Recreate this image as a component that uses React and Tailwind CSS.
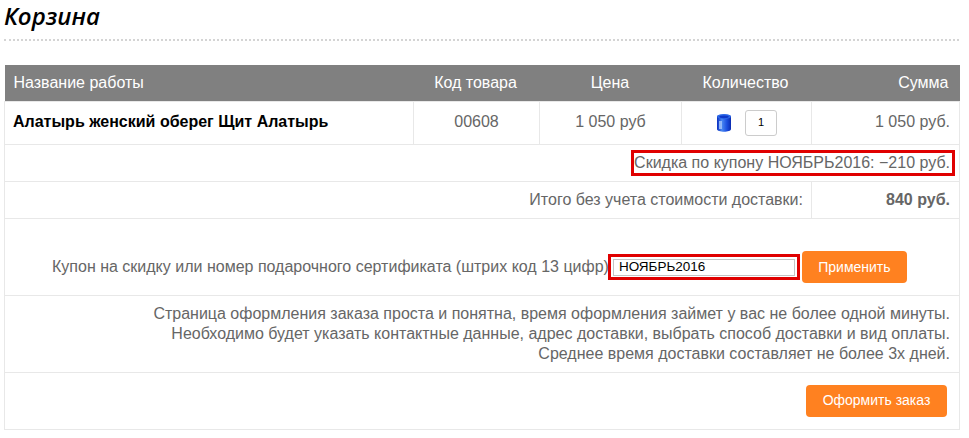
const cell = "border border-[#e8e8e8]";

const BarrelIcon = () => (
  <svg width="16" height="20" viewBox="0 0 16 20">
    <defs>
      <linearGradient id="barrel" x1="0" x2="1" y1="0" y2="0">
        <stop offset="0" stopColor="#0a2fc0" />
        <stop offset="0.35" stopColor="#4a88f2" />
        <stop offset="0.7" stopColor="#1c4fe0" />
        <stop offset="1" stopColor="#0a2bb0" />
      </linearGradient>
    </defs>
    <path d="M1 3.5C1 0.8 15 0.8 15 3.5V16C15 19.6 1 19.6 1 16Z" fill="url(#barrel)" />
    <ellipse cx="8" cy="3.5" rx="7" ry="2.6" fill="#2f6be8" />
    <ellipse cx="8" cy="3.8" rx="4.8" ry="1.4" fill="#0f38c8" />
    <rect x="3" y="8" width="3" height="8" fill="#a9c8fa" opacity="0.8" />
  </svg>
);

export default function App() {
  return (
    <div className="w-[969px] h-[438px] overflow-hidden bg-white font-['Liberation_Sans',Arial,sans-serif] text-[16px] text-[#666666]">
      <div className="pl-[4px] pr-[10px]">
        <h1 className="h-[41px] border-b-2 border-dotted border-[#d4d4d4] font-['Open_Sans',sans-serif] text-[24px] leading-[32px] italic font-semibold text-black">
          Корзина
        </h1>
        <table className="mt-[24px] w-[955px] table-fixed border-collapse">
          <colgroup>
            <col className="w-[409px]" />
            <col className="w-[126px]" />
            <col className="w-[142px]" />
            <col className="w-[130px]" />
            <col className="w-[148px]" />
          </colgroup>
          <thead>
            <tr className="h-[36px] bg-[#808080] font-normal text-white">
              <th className="pl-[9px] text-left font-normal">Название работы</th>
              <th className="pr-[2px] font-normal">Код товара</th>
              <th className="pr-[1px] font-normal">Цена</th>
              <th className="pr-[2px] font-normal">Количество</th>
              <th className="pr-[11px] text-right font-normal">Сумма</th>
            </tr>
          </thead>
          <tbody>
            <tr className="h-[43px]">
              <td className={`${cell} pl-[8px] pb-[2px] font-bold text-black`}>Алатырь женский оберег Щит Алатырь</td>
              <td className={`${cell} pb-[2px] text-center`}>00608</td>
              <td className={`${cell} pb-[2px] text-center`}>1 050 руб</td>
              <td className={cell}>
                <div className="flex items-center justify-center gap-[13px]">
                  <BarrelIcon />
                  <div className="flex h-[26px] w-[32px] items-center justify-center rounded-[3px] border border-[#cccccc] text-[11px] text-black">
                    1
                  </div>
                </div>
              </td>
              <td className={`${cell} pr-[9px] pb-[2px] text-right`}>1 050 руб.</td>
            </tr>
            <tr className="h-[37px]">
              <td colSpan={5} className={`${cell} pr-[4px]`}>
                <div className="flex justify-end">
                  <span className="h-[26px] border-[3px] border-[#e00000] pr-[2px] leading-[20px]">
                    Скидка по купону НОЯБРЬ2016: −210 руб.
                  </span>
                </div>
              </td>
            </tr>
            <tr className="h-[37px]">
              <td colSpan={4} className={`${cell} pr-[8px] text-right`}>Итого без учета стоимости доставки:</td>
              <td className={`${cell} pr-[9px] text-right font-bold`}>840 руб.</td>
            </tr>
            <tr className="h-[77px]">
              <td colSpan={5} className={cell}>
                <div className="flex items-center pl-[47px] pt-[21px]">
                  <span className="whitespace-nowrap">Купон на скидку или номер подарочного сертификата (штрих код 13 цифр)</span>
                  <span className="ml-[-1px] flex h-[26px] w-[192px] shrink-0 items-center justify-center border-[3px] border-[#e00000]">
                    <input
                      readOnly
                      value="НОЯБРЬ2016"
                      className="h-[17px] w-[182px] border border-[#c4c4c4] pl-[5px] font-['Liberation_Sans',sans-serif] text-[13.5px] text-black outline-none"
                    />
                  </span>
                  <button className="ml-[2px] h-[32px] w-[105px] rounded-[4px] bg-[#ff8120] text-[14px] text-white">Применить</button>
                </div>
              </td>
            </tr>
            <tr className="h-[77px]">
              <td colSpan={5} className={`${cell} pr-[9px] text-right leading-[20px]`}>
                Страница оформления заказа проста и понятна, время оформления займет у вас не более одной минуты.
                <br />
                Необходимо будет указать контактные данные, адрес доставки, выбрать способ доставки и вид оплаты.
                <br />
                Среднее время доставки составляет не более 3х дней.
              </td>
            </tr>
            <tr className="h-[57px]">
              <td colSpan={5} className={`${cell} pr-[12px]`}>
                <div className="flex justify-end">
                  <button className="h-[32px] w-[141px] rounded-[4px] bg-[#ff8120] text-[14px] text-white">Оформить заказ</button>
                </div>
              </td>
            </tr>
          </tbody>
        </table>
      </div>
    </div>
  );
}
